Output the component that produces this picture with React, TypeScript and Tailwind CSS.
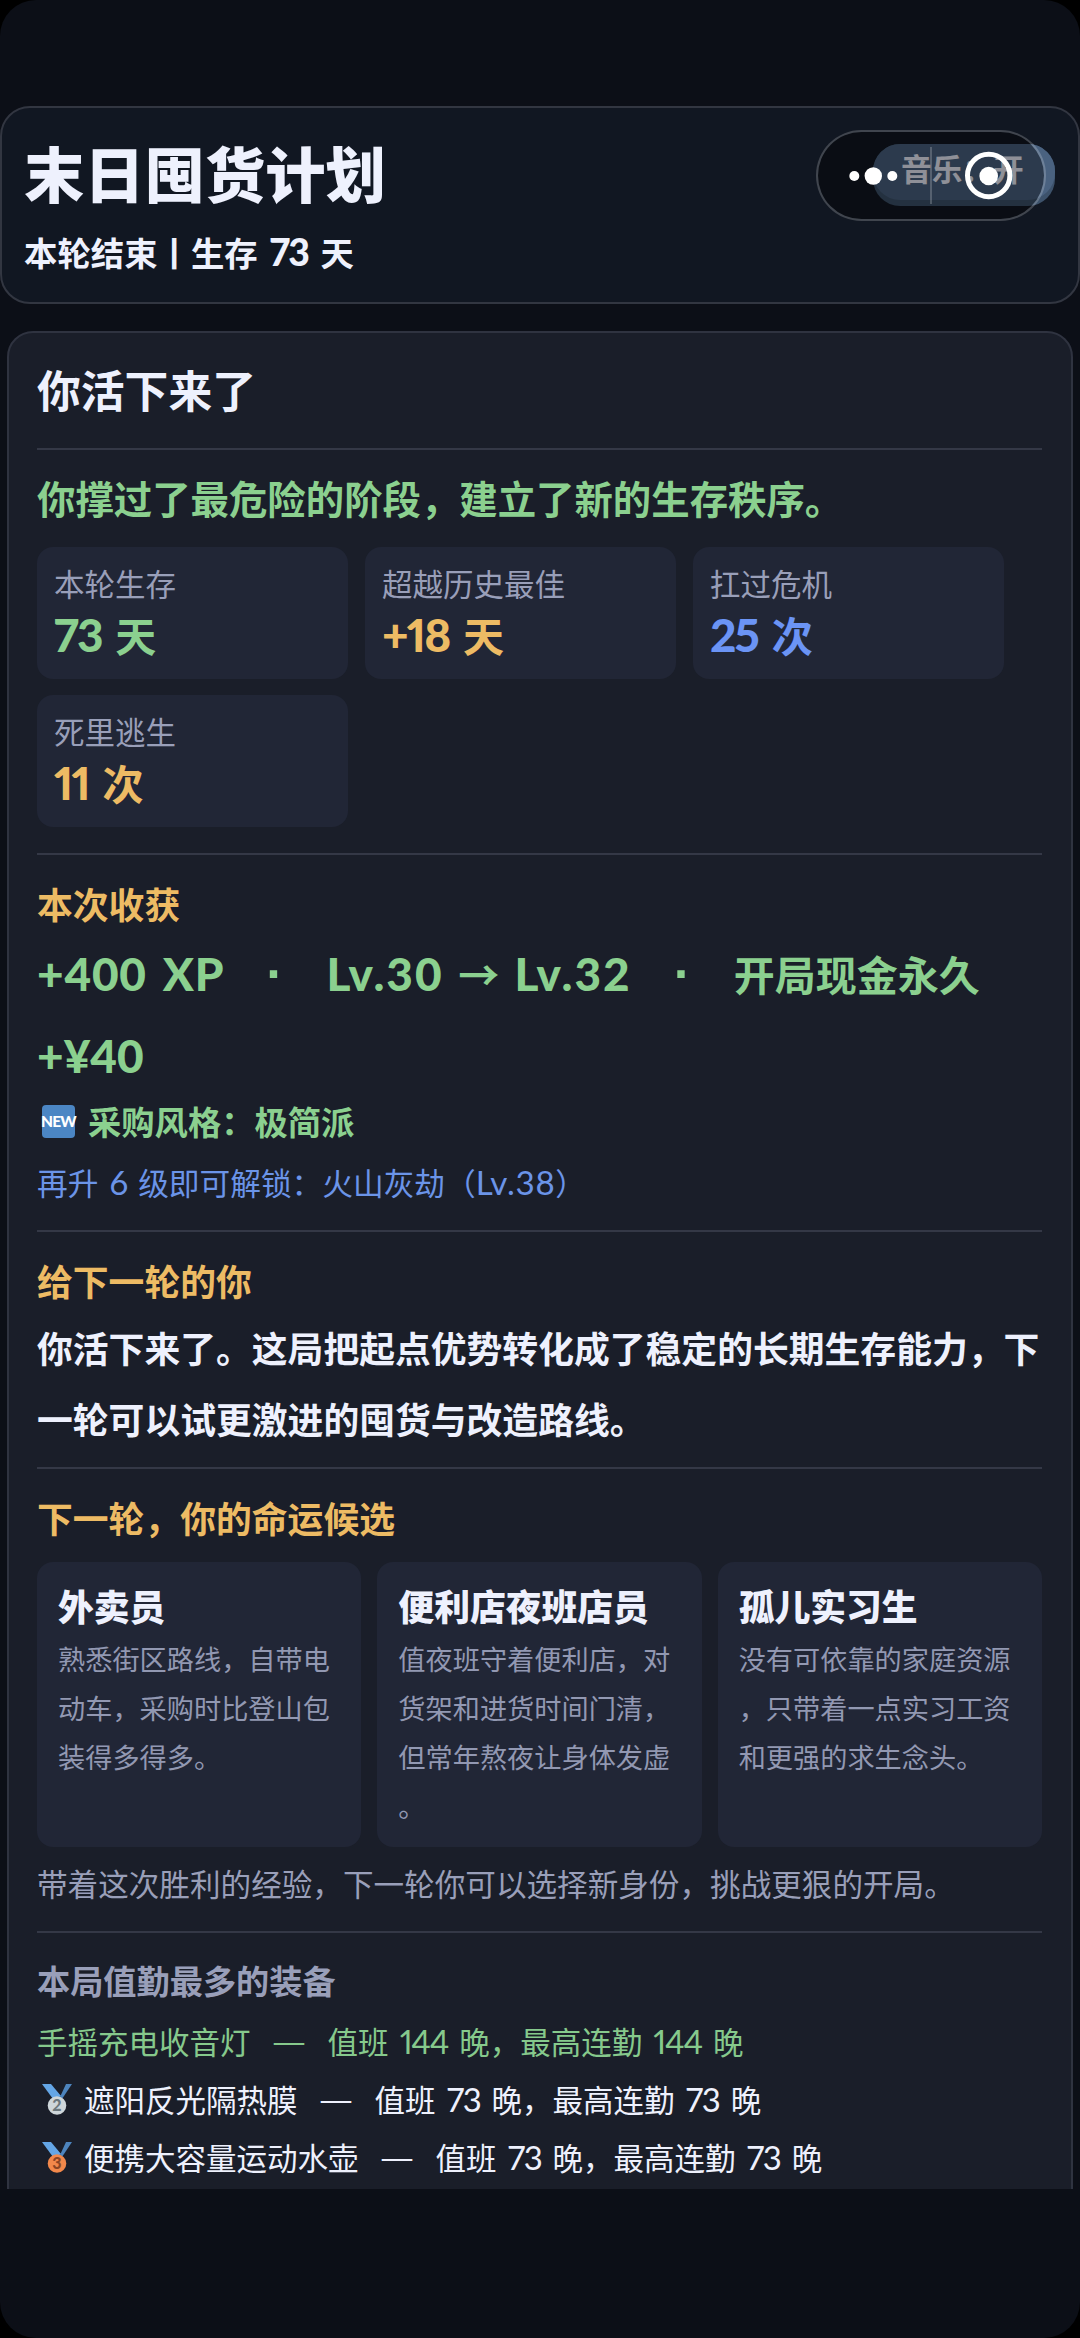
import type { ReactNode } from "react"

const stats = [
  { label: "本轮生存", value: "73", unit: "天", color: "text-[#8bd08f]" },
  { label: "超越历史最佳", value: "+18", unit: "天", color: "text-[#edbb64]" },
  { label: "扛过危机", value: "25", unit: "次", color: "text-[#6b94f5]" },
  { label: "死里逃生", value: "11", unit: "次", color: "text-[#edbb64]" },
]

const candidates = [
  { name: "外卖员", desc: "熟悉街区路线，自带电动车，采购时比登山包装得多得多。" },
  { name: "便利店夜班店员", desc: "值夜班守着便利店，对货架和进货时间门清，但常年熬夜让身体发虚。" },
  { name: "孤儿实习生", desc: "没有可依靠的家庭资源，只带着一点实习工资和更强的求生念头。" },
]

const gear = [
  { name: "手摇充电收音灯", nights: 144, rank: 1 },
  { name: "遮阳反光隔热膜", nights: 73, rank: 2 },
  { name: "便携大容量运动水壶", nights: 73, rank: 3 },
]

// Latin letters and digits are set a bit larger than the Chinese text
function Num({ children }: { children: ReactNode }) {
  return (
    <span className="font-['Lato','Noto_Sans_CJK_SC',sans-serif] text-[1.08em] tracking-[-0.04em] proportional-nums">
      {children}
    </span>
  )
}

function BoldNum({ children }: { children: ReactNode }) {
  return (
    <span className="font-['Lato','Noto_Sans_CJK_SC',sans-serif] text-[1.12em] font-black tracking-[-0.04em] proportional-nums">
      {children}
    </span>
  )
}

function RewardText({ children }: { children: ReactNode }) {
  return <span className="font-['Lato','Noto_Sans_CJK_SC',sans-serif] text-[1.12em] font-black">{children}</span>
}

function Dot() {
  return (
    <span className="inline-block w-[102px] text-center font-['Liberation_Sans',sans-serif] text-[52px] leading-[40px]">·</span>
  )
}

function Divider() {
  return <div className="h-[2px] w-full shrink-0 bg-[#343846]" />
}

function Medal({ rank }: { rank: number }) {
  return (
    <svg width="30" height="31" viewBox="0 0 30 31" className="mr-[12px] shrink-0">
      <path d="M18 13 L24 0 H30 L20 15 Z" fill="#4d84bd" />
      <path d="M0 0 H9 L19 12 L14 15 H11 Z" fill="#64a6e6" />
      <circle cx="15" cy="21.5" r="9.3" fill={rank === 2 ? "#ced6da" : "#f2884b"} />
      <text
        x="15"
        y="27.2"
        textAnchor="middle"
        fontFamily="Lato, sans-serif"
        fontSize="16"
        fontWeight="900"
        fill={rank === 2 ? "#6b777d" : "#8b4524"}
      >
        {rank}
      </text>
    </svg>
  )
}

function Capsule() {
  return (
    <>
      {/* Music toggle sits underneath the system capsule */}
      <div className="absolute top-[36px] left-[871px] h-[62px] w-[182px] rounded-[27px] bg-[#3d526b]">
        <div className="flex h-[56px] items-center rounded-[27px] bg-[#4a6280] pb-[8px] pl-[28px] text-[30.7px] leading-[40px] font-bold text-[#eef1fd]">
          音乐：开
        </div>
      </div>
      <div className="absolute top-[22px] left-[814px] h-[91px] w-[230px] rounded-full border-2 border-white/20 bg-black/40 bg-clip-padding" />
      <svg className="absolute top-[22px] left-[814px]" width="230" height="91" viewBox="0 0 230 91">
        <rect x="114" y="17" width="2" height="57" fill="#fff" fillOpacity="0.2" />
        <circle cx="38.3" cy="46" r="5" fill="#fff" />
        <circle cx="57.3" cy="46" r="8.7" fill="#fff" />
        <circle cx="76.3" cy="46" r="5" fill="#fff" />
        <circle cx="172.7" cy="45.5" r="21.2" fill="none" stroke="#fff" strokeWidth="5" />
        <circle cx="172.7" cy="46" r="9.3" fill="#fff" />
      </svg>
    </>
  )
}

export default function App() {
  return (
    <div className="h-[2338px] w-[1080px] overflow-hidden bg-black font-['Noto_Sans_CJK_SC',sans-serif] text-[#eef1fd] [word-spacing:4.3px]">
      <div className="flex h-full flex-col rounded-[36px] bg-[#0c0f17] pt-[106px]">
        {/* Header */}
        <header className="relative h-[198px] shrink-0 rounded-[30px] border-2 border-[#323641] bg-[#111722] pl-[22px]">
          <h1 className="pt-[26px] text-[60.3px] leading-[76px] font-black">末日囤货计划</h1>
          <p className="mt-[22px] text-[33.4px] leading-[40px] font-bold">
            本轮结束丨生存 <BoldNum>73</BoldNum> 天
          </p>
          <Capsule />
        </header>

        {/* Summary panel, cut off by the bottom of the scroll area */}
        <div className="mt-[27px] h-[1858px] shrink-0 overflow-hidden px-[7px]">
          <main className="flex h-[1900px] flex-col rounded-[26px] border-2 border-[#2f3340] bg-[#1a1e29] pr-[29px] pl-[28px]">
            <h2 className="h-[115px] pt-[29px] text-[43.8px] leading-[54px] font-bold">你活下来了</h2>
            <Divider />

            <p className="h-[97px] pt-[22px] text-[38.4px] leading-[50px] font-bold text-[#8bd08f]">
              你撑过了最危险的阶段，建立了新的生存秩序。
            </p>
            <div className="flex flex-wrap gap-x-[17px] gap-y-[16px]">
              {stats.map((stat) => (
                <div key={stat.label} className="h-[132px] w-[311px] rounded-[16px] bg-[#212636] pl-[17px]">
                  <div className="pt-[16px] text-[30.5px] leading-[40px] text-[#999fb9]">{stat.label}</div>
                  <div className={`mt-[6px] text-[41px] leading-[50px] font-bold ${stat.color}`}>
                    <BoldNum>{stat.value}</BoldNum> {stat.unit}
                  </div>
                </div>
              ))}
            </div>
            <div className="h-[26px] shrink-0" />
            <Divider />

            <h3 className="mt-[25px] text-[35.8px] leading-[46px] font-bold text-[#edbb64]">本次收获</h3>
            <div className="mt-[6px] text-[41px] leading-[82px] font-bold whitespace-nowrap text-[#8bd08f]">
              <div className="h-[82px] tracking-[0.02em]">
                <RewardText>+400 XP</RewardText>
                <Dot />
                <span className="tracking-[0.05em]">
                  <RewardText>Lv.30</RewardText>
                </span>{" "}
                →{" "}
                <span className="tracking-[0.05em]">
                  <RewardText>Lv.32</RewardText>
                </span>
                <Dot />
                <span className="tracking-normal">开局现金永久</span>
              </div>
              <div className="h-[82px]">
                <RewardText>+¥40</RewardText>
              </div>
            </div>
            <div className="mt-[3px] flex h-[44px] items-center pl-[5px] text-[33.3px] leading-[44px] font-bold text-[#8bd08f]">
              <span className="mr-[13px] flex h-[33px] w-[33px] items-center justify-center rounded-[4px] bg-[#4b86c4] font-['Lato',sans-serif] text-[15.5px] font-black tracking-[-0.8px] text-white">
                NEW
              </span>
              采购风格：极简派
            </div>
            <p className="mt-[19px] h-[68px] text-[30.7px] leading-[40px] text-[#6b94e8]">
              再升 <Num>6</Num> 级即可解锁：火山灰劫（
              <span className="font-['Lato',sans-serif] text-[1.08em] tracking-[0.02em]">Lv.38</span>）
            </p>
            <Divider />

            <h3 className="mt-[25px] text-[35.8px] leading-[46px] font-bold text-[#edbb64]">给下一轮的你</h3>
            <p className="mt-[9px] h-[155px] text-[35.8px] leading-[71px] font-bold [line-break:anywhere]">
              你活下来了。这局把起点优势转化成了稳定的长期生存能力，下一轮可以试更激进的囤货与改造路线。
            </p>
            <Divider />

            <h3 className="mt-[25px] text-[35.8px] leading-[46px] font-bold text-[#edbb64]">下一轮，你的命运候选</h3>
            <div className="mt-[22px] grid grid-cols-3 gap-x-[16px]">
              {candidates.map((c) => (
                <div key={c.name} className="h-[285px] rounded-[16px] bg-[#212636] pl-[21px]">
                  <div className="pt-[20px] text-[35.8px] leading-[46px] font-black">{c.name}</div>
                  <p className="mt-[6px] w-[280px] text-[27.2px] leading-[49px] text-[#9298b2] [line-break:anywhere]">
                    {c.desc}
                  </p>
                </div>
              ))}
            </div>
            <p className="mt-[16px] h-[68px] text-[30.6px] leading-[40px] text-[#999fb9]">
              带着这次胜利的经验，下一轮你可以选择新身份，挑战更狠的开局。
            </p>
            <Divider />

            <h3 className="mt-[25px] text-[33.2px] leading-[44px] font-bold text-[#999fb9]">本局值勤最多的装备</h3>
            <div className="mt-[10px]">
              {gear.map((item) => (
                <div
                  key={item.name}
                  className={`flex h-[58px] items-center text-[30.5px] leading-[58px] ${item.rank === 1 ? "text-[#86c98c]" : "pl-[5px]"}`}
                >
                  {item.rank > 1 && <Medal rank={item.rank} />}
                  <span>{item.name}</span>
                  <span className="w-[77px] text-center font-['Liberation_Sans',sans-serif]">—</span>
                  <span>
                    值班 <Num>{item.nights}</Num> 晚，最高连勤 <Num>{item.nights}</Num> 晚
                  </span>
                </div>
              ))}
            </div>
          </main>
        </div>
      </div>
    </div>
  )
}
